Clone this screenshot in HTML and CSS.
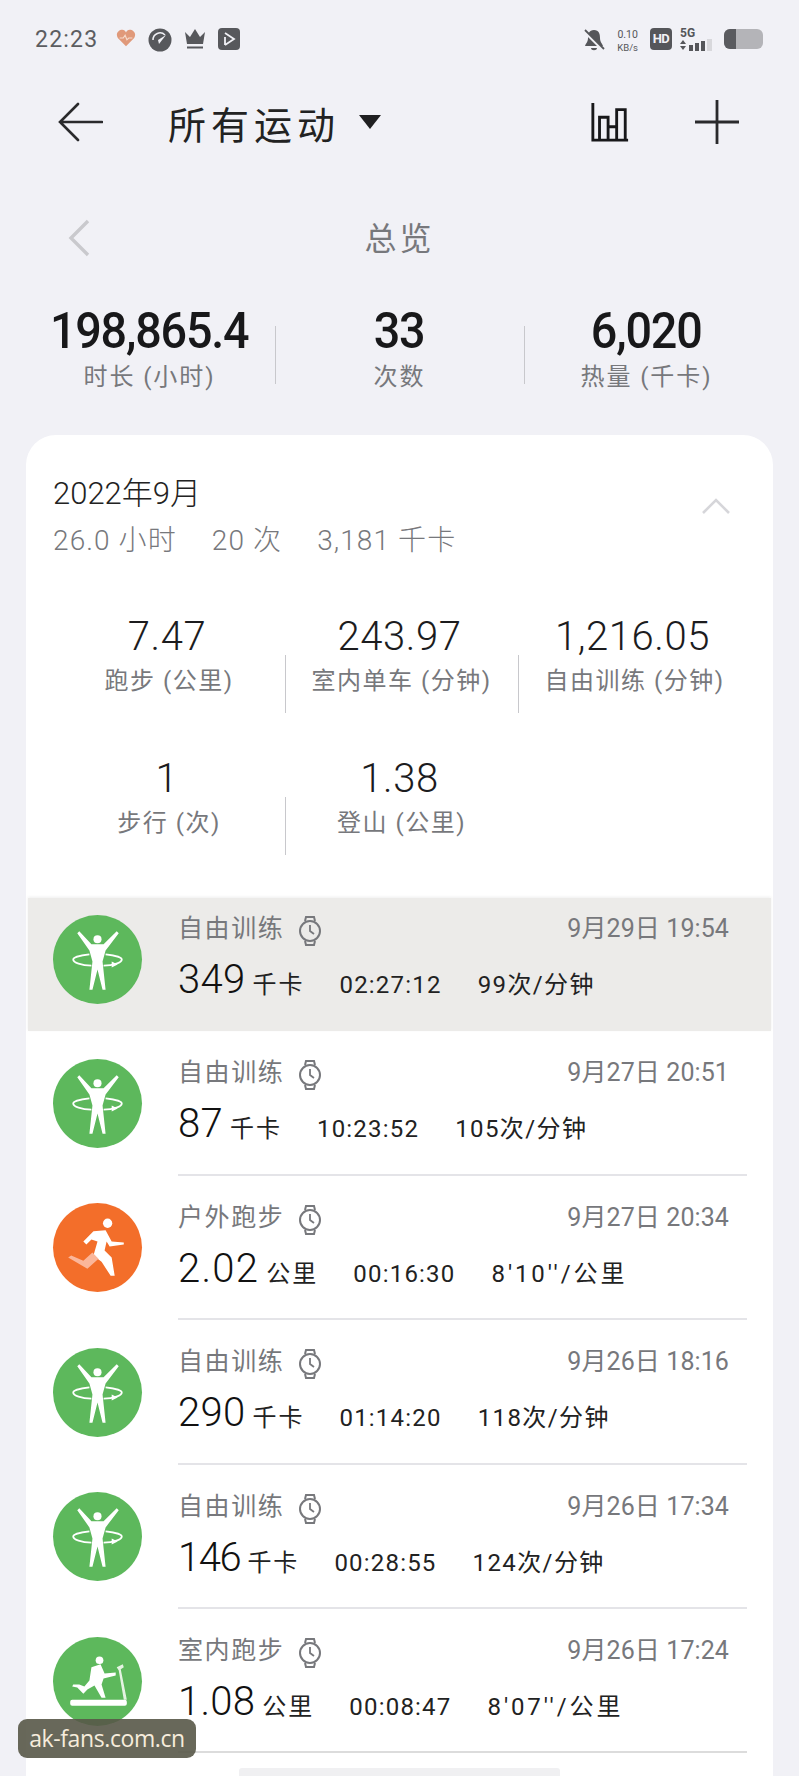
FILE: index.html
```html
<!DOCTYPE html>
<html lang="zh-CN">
<head>
  <meta charset="UTF-8">
  <meta name="viewport" content="width=device-width, initial-scale=1.0">
  <title>所有运动</title>
  <link rel="stylesheet" href="styles.css">
</head>
<body>
  <svg class="sprite">
    <symbol id="watch" viewBox="0 0 24 32">
      <path d="M7 6 L8 2 H16 L17 6 M7 26 L8 30 H16 L17 26" fill="none" stroke="currentColor" stroke-width="2"/>
      <circle cx="12" cy="16" r="10" fill="none" stroke="currentColor" stroke-width="2"/>
      <path d="M12 10 V16 L16 19" fill="none" stroke="currentColor" stroke-width="1.8"/>
    </symbol>
    <symbol id="hoop" viewBox="0 0 88 88">
      <circle cx="44" cy="24" r="4" fill="#fff"/>
      <path d="M24 18 L26 16 L38 29 H50 L63 16 L65 18 L52 35 L49 46 L52 74 H49 L44 54 L39 74 H36 L39 46 L36 35 Z" fill="#fff"/>
      <path d="M36 39 C26 40 20 42 20 44 C20 47 28 50 38 50 M50 50 C60 50 68 47 68 44 C68 42 62 40 52 39" fill="none" stroke="#fff" stroke-width="1.8"/>
      <path d="M58 46 L64 49 L58 52 Z" fill="#fff"/>
    </symbol>
    <symbol id="run" viewBox="0 0 88 88">
      <circle cx="54" cy="20" r="4.6" fill="#fff"/>
      <path d="M30 38 L40 28 L52 27 L58 38 L70 39 V41 L56 43 L53 38 L51 47 L58 54 L61 72 L57 72 L48 58 L40 52 L44 38 L38 36 L33 41 Z" fill="#fff"/>
      <path d="M15 54 L18 52 L30 57 L39 49 L45 55 L34 65 Z" fill="#fbb69a"/>
    </symbol>
    <symbol id="tread" viewBox="0 0 88 88">
      <circle cx="46" cy="23" r="3.8" fill="#fff"/>
      <path d="M38 30 L47 27 L51 36 L62 35 V38 L50 41 L48 47 L52 60 H48 L41 48 L34 52 L30 56 L24 50 L19 49 L20 47 L26 47 L31 49 L36 43 Z" fill="#fff"/>
      <path d="M63 30 L69 27 L70 30 L67 32 L73 62 H70 L65 33 Z" fill="#e4f3e2"/>
      <rect x="17" y="62" width="56" height="6" rx="2" fill="#fff"/>
    </symbol>
  </svg>

  <div class="status">
    <span class="clock">22:23</span>
    <svg class="ico" width="20" height="20" viewBox="0 0 22 20"><path d="M11 19 L2 10 C-1 5 3 1 7 1 C9 1 10 2 11 4 C12 2 13 1 15 1 C19 1 23 5 20 10 Z" fill="#e0997a"/><path d="M4 10 H8 L10 7 L12 12 L14 10 H18" fill="none" stroke="#f6dccd" stroke-width="1.2"/></svg>
    <svg class="ico" width="24" height="24" viewBox="0 0 24 24"><circle cx="12" cy="12" r="11.5" fill="#57585c"/><path d="M5 12 A7 7 0 0 1 17 7" fill="none" stroke="#f1f1f6" stroke-width="1.5"/><path d="M18 7 L10 12 L11 16 Z" fill="#f1f1f6"/></svg>
    <svg class="ico" width="22" height="22" viewBox="0 0 22 22"><path d="M1 4 L6 9 L11 1 L16 9 L21 4 L19 16 H3 Z" fill="#57585c"/><rect x="3" y="18.5" width="16" height="2" fill="#57585c"/></svg>
    <svg class="ico" width="22" height="22" viewBox="0 0 22 22"><rect width="22" height="22" rx="4" fill="#57585c"/><path d="M7 5 L16 11 L7 17 M7 9 V17" fill="none" stroke="#f1f1f6" stroke-width="1.8"/></svg>
    <span class="status-right">
      <svg width="22" height="24" viewBox="0 0 22 24"><path d="M11 2 C16 2 17 6 17 10 C17 14 19 15 20 18 H2 C3 15 5 14 5 10 C5 6 6 2 11 2 Z M8 20 H14 C14 23 8 23 8 20 Z" fill="#55565a"/><path d="M1 3 L21 23" stroke="#f1f1f6" stroke-width="3"/><path d="M2 2 L21 21" stroke="#55565a" stroke-width="1.8"/></svg>
      <span class="speed">0.10<br><small>KB/s</small></span>
      <span class="hd">HD</span>
      <span class="net">
        <b>5G</b>
        <svg width="34" height="12" viewBox="0 0 34 12"><path d="M0 5 H6 L3 1 Z M0 7 H6 L3 11 Z" fill="#55565a"/><rect x="9" y="6" width="4" height="6" fill="#55565a"/><rect x="15" y="4" width="4" height="8" fill="#55565a"/><rect x="21" y="2" width="4" height="10" fill="#55565a"/><rect x="27" y="0" width="5" height="12" fill="#d8d8dc"/></svg>
      </span>
      <span class="battery"><i></i></span>
    </span>
  </div>

  <header class="topbar">
    <svg class="back" width="46" height="40" viewBox="0 0 46 40"><path d="M21 2 L3 20 L21 38 M3 20 H45" fill="none" stroke="#2a2a2c" stroke-width="2.6" stroke-linecap="round"/></svg>
    <h1>所有运动</h1>
    <span class="caret"></span>
    <svg class="chart" width="40" height="40" viewBox="0 0 40 42"><path d="M2 1 V40 H39 M9 39 V16 H18 V39 M18 26 H27 M27 39 V8 H36 V39" fill="none" stroke="#18181a" stroke-width="3"/></svg>
    <svg class="plus" width="44" height="44" viewBox="0 0 44 44"><path d="M22 0 V44 M0 22 H44" stroke="#2a2a2c" stroke-width="2.8" stroke-linecap="round"/></svg>
  </header>

  <div class="overview">
    <svg class="prev" width="22" height="38" viewBox="0 0 22 38"><path d="M20 2 L3 19 L20 36" fill="none" stroke="#c9c9cd" stroke-width="3.4"/></svg>
    <h2>总览</h2>
  </div>

  <section class="totals">
    <div class="total"><strong>198,865.4</strong><span>时长 (小时)</span></div>
    <div class="total"><strong>33</strong><span>次数</span></div>
    <div class="total"><strong>6,020</strong><span>热量 (千卡)</span></div>
  </section>

  <main class="card">
    <div class="month">
      <div>
        <div class="month-name">2022年9月</div>
        <div class="month-sum"><span>26.0 小时</span><span>20 次</span><span>3,181 千卡</span></div>
      </div>
      <svg class="collapse" width="30" height="18" viewBox="0 0 30 18"><path d="M2 16 L15 3 L28 16" fill="none" stroke="#d6d6da" stroke-width="2.6"/></svg>
    </div>

    <div class="sports">
      <div class="sport"><strong>7.47</strong><span>跑步 (公里)</span></div>
      <div class="sport"><strong>243.97</strong><span>室内单车 (分钟)</span></div>
      <div class="sport"><strong>1,216.05</strong><span>自由训练 (分钟)</span></div>
      <div class="sport"><strong>1</strong><span>步行 (次)</span></div>
      <div class="sport"><strong>1.38</strong><span>登山 (公里)</span></div>
    </div>

    <div class="rows">
      <div class="row row-active">
        <svg class="badge green"><use href="#hoop"/></svg>
        <div class="info">
          <div class="line1"><span class="name">自由训练</span><svg class="watch"><use href="#watch"/></svg><span class="date">9月29日 19:54</span></div>
          <div class="line2"><b>349</b><em>千卡</em><span>02:27:12</span><span class="rate">99次/分钟</span></div>
        </div>
      </div>
      <div class="row">
        <svg class="badge green"><use href="#hoop"/></svg>
        <div class="info">
          <div class="line1"><span class="name">自由训练</span><svg class="watch"><use href="#watch"/></svg><span class="date">9月27日 20:51</span></div>
          <div class="line2"><b>87</b><em>千卡</em><span>10:23:52</span><span class="rate">105次/分钟</span></div>
        </div>
      </div>
      <div class="row">
        <svg class="badge orange"><use href="#run"/></svg>
        <div class="info">
          <div class="line1"><span class="name">户外跑步</span><svg class="watch"><use href="#watch"/></svg><span class="date">9月27日 20:34</span></div>
          <div class="line2"><b class="wide">2.02</b><em>公里</em><span>00:16:30</span><span class="pace">8'10''/公里</span></div>
        </div>
      </div>
      <div class="row">
        <svg class="badge green"><use href="#hoop"/></svg>
        <div class="info">
          <div class="line1"><span class="name">自由训练</span><svg class="watch"><use href="#watch"/></svg><span class="date">9月26日 18:16</span></div>
          <div class="line2"><b>290</b><em>千卡</em><span>01:14:20</span><span class="rate">118次/分钟</span></div>
        </div>
      </div>
      <div class="row">
        <svg class="badge green"><use href="#hoop"/></svg>
        <div class="info">
          <div class="line1"><span class="name">自由训练</span><svg class="watch"><use href="#watch"/></svg><span class="date">9月26日 17:34</span></div>
          <div class="line2"><b class="tight">146</b><em>千卡</em><span>00:28:55</span><span class="rate">124次/分钟</span></div>
        </div>
      </div>
      <div class="row">
        <svg class="badge green"><use href="#tread"/></svg>
        <div class="info">
          <div class="line1"><span class="name">室内跑步</span><svg class="watch"><use href="#watch"/></svg><span class="date">9月26日 17:24</span></div>
          <div class="line2"><b>1.08</b><em>公里</em><span>00:08:47</span><span class="pace">8'07''/公里</span></div>
        </div>
      </div>
    </div>
    <div class="pill"></div>
  </main>

  <div class="watermark">ak-fans.com.cn</div>
</body>
</html>
```

FILE: styles.css
```css
* { box-sizing: border-box; }
html, body { height: 1776px; overflow: hidden; }
body { margin: 0; background: #f1f1f6; color: #1c1c1e; font-family: Roboto, "Noto Sans CJK SC", sans-serif; font-weight: 300; position: relative; }
.sprite { display: none; }

/* status bar */
.status { height: 76px; padding: 28px 36px 0 35px; display: flex; align-items: flex-start; }
.clock { font-size: 23px; line-height: 24px; color: #5c5d61; letter-spacing: 1.2px; margin-right: 18px; font-weight: 400; }
.ico { margin-right: 12px; }
.status-right { margin-left: auto; display: flex; align-items: flex-start; color: #55565a; }
.speed { font-size: 10.5px; line-height: 13px; margin: 0 12px 0 12px; text-align: center; font-weight: 400; }
.speed small { font-size: 9.5px; }
.hd { background: #55565a; color: #f1f1f6; font-size: 13px; font-weight: 700; border-radius: 4px; width: 22px; height: 22px; line-height: 22px; text-align: center; margin-right: 8px; letter-spacing: -.5px; }
.net { width: 34px; margin-right: 10px; display: flex; flex-direction: column; font-size: 12px; line-height: 10px; margin-top: 0; }
.net b { font-weight: 700; height: 11px; }
.battery { width: 39px; height: 20px; border-radius: 6px; background: #b4b4b8; overflow: hidden; display: block; margin-top: 1px; }
.battery i { display: block; width: 12px; height: 20px; background: #5a5b5f; }

/* title bar */
.topbar { height: 90px; display: flex; align-items: center; padding: 2px 0 0 57px; }
.topbar h1 { margin: 0 0 0 65px; font-size: 38px; font-weight: 400; letter-spacing: 5px; color: #222; }
.caret { width: 0; height: 0; margin-left: 19px; border-left: 11px solid transparent; border-right: 11px solid transparent; border-top: 14px solid #1f1f21; }
.chart { margin-left: 209px; }
.plus { margin-left: 65px; }

/* overview */
.overview { height: 72px; margin-top: 34px; display: flex; align-items: center; justify-content: center; position: relative; }
.overview h2 { margin: 0; font-size: 32px; font-weight: 400; letter-spacing: 3px; color: #77787c; }
.prev { position: absolute; left: 68px; top: 19px; }

.totals { height: 118px; padding-top: 34px; display: grid; grid-template-columns: 275px 249px 245px; }
.total { text-align: center; display: flex; flex-direction: column; align-items: center; position: relative; }
.total:first-child { padding-left: 24px; }
.total + .total::before { content: ""; position: absolute; left: 0; top: 20px; height: 58px; width: 1px; background: #c8c8cc; }
.total strong { font-size: 50px; line-height: 50px; font-weight: 500; letter-spacing: -1.3px; color: #18181a; transform: scaleX(.935); white-space: nowrap; }
.total span { font-size: 24px; line-height: 34px; margin-top: 4px; color: #77787c; letter-spacing: 1.9px; font-weight: 400; }

/* month card */
.card { position: absolute; left: 26px; top: 435px; width: 747px; height: 1341px; background: #fff; border-radius: 30px 30px 0 0; }
.month { padding: 38px 42px 0 27px; height: 137px; display: flex; justify-content: space-between; }
.month-name { font-size: 31px; line-height: 42px; color: #222; }
.month-sum { font-size: 28px; line-height: 40px; margin-top: 6px; color: #77787c; display: flex; gap: 35px; letter-spacing: 1.1px; }
.collapse { margin-top: 24px; }

.sports { display: grid; grid-template-columns: 232px 233px 233px; grid-auto-rows: 142px; padding-left: 27px; height: 326px; padding-top: 39px; }
.sport { display: flex; flex-direction: column; align-items: center; position: relative; }
.sport strong { font-size: 40px; line-height: 52px; font-weight: 300; letter-spacing: .6px; color: #1c1c1e; padding-right: 4px; }
.sport span { font-size: 24px; line-height: 34px; margin-top: 1px; color: #77787c; letter-spacing: 1.5px; font-weight: 400; white-space: nowrap; }
.sport + .sport::before { content: ""; position: absolute; left: 0; top: 44px; width: 1px; height: 58px; background: #c8c8cc; }
.sport:nth-child(4)::before { display: none; }

/* workout rows */
.row { height: 144.4px; display: flex; align-items: center; padding-left: 27px; }
.row-active { height: 133.4px; background: #ecebe9; margin: 0 2px; padding: 0 0 11px 25px; box-shadow: 0 -1px 3px #0001; }
.badge { width: 89px; height: 89px; border-radius: 50%; flex: none; }
.green { background: #5db85c; }
.orange { background: #f36e2a; }
.info { margin-left: 36px; width: 569px; height: 100%; border-bottom: 2px solid #e4e4e8; padding-top: 19px; }
.row-active .info { border-bottom: 0; padding-top: 8px; }
.row:last-child .info { border-bottom-color: #dcdcdc; }
.line1 { display: flex; align-items: center; height: 40px; color: #77787c; }
.name { font-size: 25px; letter-spacing: 1.6px; font-weight: 400; }
.watch { width: 24px; height: 32px; margin-left: 14px; color: #77787c; margin-top: 10px; }
.date { margin-left: auto; margin-right: 18px; font-size: 25px; letter-spacing: .1px; font-weight: 400; }
.line2 { display: flex; align-items: baseline; margin-top: 9px; color: #222; }
.line2 b { font-size: 40px; line-height: 50px; font-weight: 300; letter-spacing: .3px; color: #111; }
.line2 .wide { letter-spacing: 1.3px; }
.line2 .tight { letter-spacing: -1.4px; }
.line2 em { font-style: normal; font-size: 24px; margin-left: 7px; margin-right: 35px; letter-spacing: 2px; font-weight: 400; }
.line2 span { font-size: 24px; margin-right: 36px; letter-spacing: 1.2px; font-weight: 400; }
.line2 .rate { letter-spacing: 1.4px; }
.line2 .pace { letter-spacing: 2.9px; }

.pill { position: absolute; left: 213px; bottom: 0; width: 321px; height: 8px; background: #f0f0f2; border-radius: 3px 3px 0 0; }

.watermark { position: absolute; left: 18px; top: 1719px; width: 178px; height: 39px; background: rgba(88, 88, 72, .9); border-radius: 9px; color: #f6ecdc; font-size: 23px; line-height: 39px; text-align: center; font-family: "Open Sans", sans-serif; font-weight: 400; letter-spacing: -.4px; }
```
